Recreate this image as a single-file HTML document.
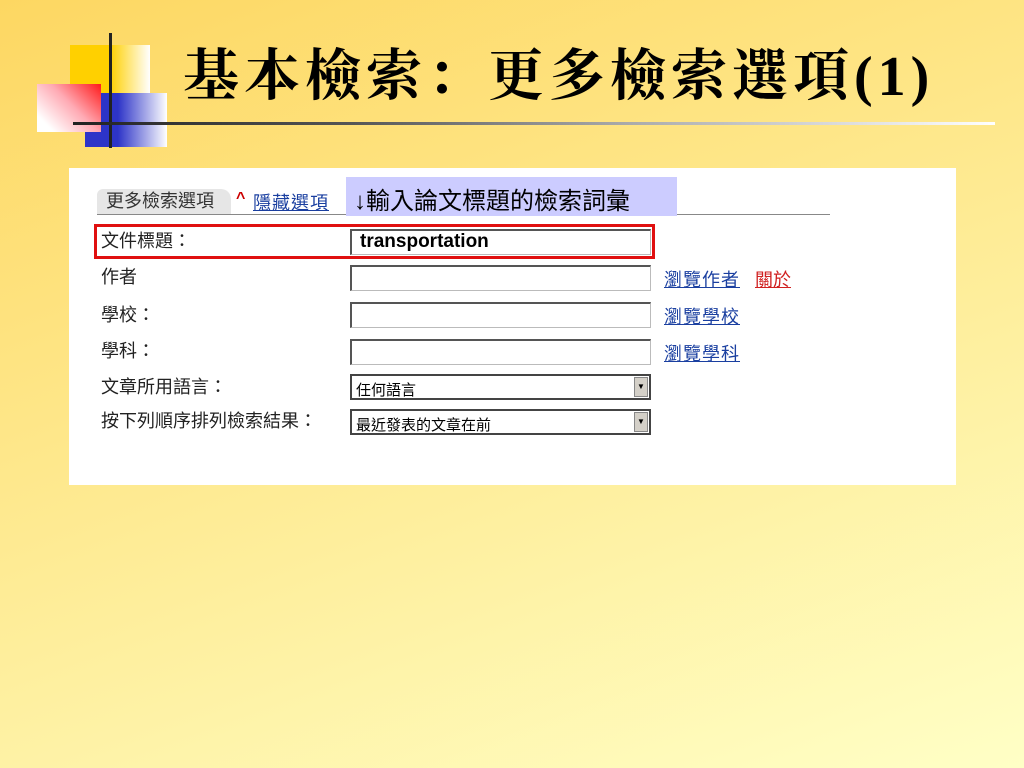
<!DOCTYPE html>
<html><head><meta charset="utf-8"><style>
*{margin:0;padding:0;box-sizing:border-box}
body{width:1024px;height:768px;overflow:hidden;position:relative;background:linear-gradient(160deg,#fdd762 0%,#fee98f 45%,#ffffc6 100%);font-family:"Liberation Sans","Noto Sans CJK TC",sans-serif}
.a{position:absolute}
.title{left:183px;top:42px;font-family:"Liberation Serif","Noto Serif CJK SC",serif;font-weight:bold;font-size:56px;letter-spacing:5px;color:#000;white-space:nowrap;line-height:70px}
.lbl{font-size:18px;color:#222;left:101px;line-height:22px}
.inp{left:350px;width:301px;height:26px;background:#fff;border:1px solid #bbb;border-top:2px solid #555;border-left:2px solid #555}
.lnk{font-size:18px;letter-spacing:1px;color:#1a3fa0;text-decoration:underline;white-space:nowrap}
.sel{left:350px;width:301px;height:26px;background:#fff;border:2px solid #444;font-size:15px;padding:3px 4px;color:#000}
.sel b{position:absolute;right:1px;top:1px;width:14px;height:20px;background:#d4d0c8;border:1px solid #888;font-size:8px;text-align:center;line-height:18px}
</style></head><body>
<div class="a" style="left:70px;top:45px;width:80px;height:60px;background:linear-gradient(90deg,#ffd000 0%,#ffd000 50%,#fff 100%)"></div>
<div class="a" style="left:85px;top:93px;width:82px;height:54px;background:linear-gradient(90deg,#2d34c8 0%,#2d34c8 40%,#fff 100%)"></div>
<div class="a" style="left:37px;top:84px;width:64px;height:48px;background:linear-gradient(225deg,#ff1a1a 0%,#ffaab4 45%,#fff 85%)"></div>
<div class="a" style="left:109px;top:33px;width:3px;height:115px;background:#222"></div>
<div class="a" style="left:73px;top:122px;width:922px;height:3px;background:linear-gradient(90deg,#222 0%,#555 30%,#aaa 60%,#fff 100%)"></div>
<div class="a title">基本檢索：更多檢索選項(1)</div>
<div class="a" style="left:69px;top:168px;width:887px;height:317px;background:#fff"></div>
<div class="a" style="left:97px;top:189px;width:134px;height:25px;background:#e6e6e6;border-radius:6px 10px 0 0;font-size:18px;color:#333;padding:0 0 0 9px;line-height:24px;white-space:nowrap">更多檢索選項</div>
<div class="a" style="left:236px;top:190px;font-size:16px;color:#c00;font-weight:bold">^</div>
<div class="a lnk" style="left:253px;top:189px">隱藏選項</div>
<div class="a" style="left:97px;top:214px;width:733px;height:1px;background:#888"></div>
<div class="a" style="left:346px;top:177px;width:331px;height:39px;background:#ccccff;font-size:24px;color:#000;padding:4px 0 0 8px;white-space:nowrap">↓輸入論文標題的檢索詞彙</div>
<div class="a" style="left:94px;top:224px;width:561px;height:35px;border:3px solid #e01010"></div>
<div class="a lbl" style="top:230px">文件標題：</div>
<div class="a inp" style="top:229px;border:2px solid #555;border-right:1px solid #bbb;border-bottom:1px solid #bbb"></div>
<div class="a" style="left:360px;top:231px;font-size:19px;font-weight:bold">transportation</div>
<div class="a lbl" style="top:266px">作者</div>
<div class="a inp" style="top:265px"></div>
<div class="a lnk" style="left:664px;top:266px">瀏覽作者</div>
<div class="a" style="left:755px;top:266px;font-size:18px;color:#d02020;text-decoration:underline">關於</div>
<div class="a lbl" style="top:304px">學校：</div>
<div class="a inp" style="top:302px"></div>
<div class="a lnk" style="left:664px;top:303px">瀏覽學校</div>
<div class="a lbl" style="top:340px">學科：</div>
<div class="a inp" style="top:339px"></div>
<div class="a lnk" style="left:664px;top:340px">瀏覽學科</div>
<div class="a lbl" style="top:376px">文章所用語言：</div>
<div class="a sel" style="top:374px">任何語言<b>▼</b></div>
<div class="a lbl" style="top:410px">按下列順序排列檢索結果：</div>
<div class="a sel" style="top:409px">最近發表的文章在前<b>▼</b></div>
</body></html>
